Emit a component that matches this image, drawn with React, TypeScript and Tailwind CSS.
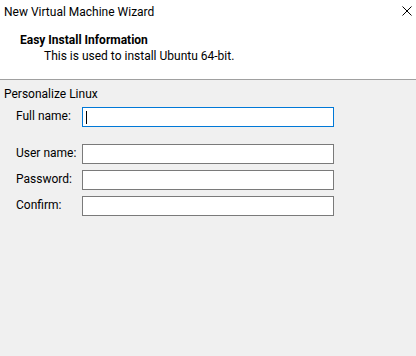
const FONT = "font-['Roboto','Noto_Sans',sans-serif]";

interface Field {
    label: string;
    focused?: boolean;
    spacing: string;
}

const FIELDS: Field[] = [
    { label: 'Full name:', focused: true, spacing: 'mt-[5px]' },
    { label: 'User name:', spacing: 'mt-[17px]' },
    { label: 'Password:', spacing: 'mt-[6px]' },
    { label: 'Confirm:', spacing: 'mt-[6px]' },
];

export default function App() {
    return (
        <div className={`w-[416px] h-[356px] bg-[#f0f0f0] text-[12px] leading-4 text-black ${FONT} flex flex-col overflow-hidden`}>
            {/* header */}
            <div className="bg-white h-[80px] border-b border-[#a0a0a0] flex flex-col">
                <div className="flex items-start justify-between pt-[4px] pl-[4px] pr-[4px]">
                    <span>New Virtual Machine Wizard</span>
                    <svg width="10" height="10" viewBox="0 0 10 10" className="mt-[2px]">
                        <path d="M0.5 0.5 L9.5 9.5 M9.5 0.5 L0.5 9.5" stroke="#000" strokeWidth="1" fill="none" />
                    </svg>
                </div>
                <div className="pl-[20px] mt-[12px] font-bold">Easy Install Information</div>
                <div className="pl-[44px]">This is used to install Ubuntu 64-bit.</div>
            </div>

            {/* body */}
            <div className="flex flex-col pt-[6px] pl-[4px]">
                <div>Personalize Linux</div>
                {FIELDS.map((f) => (
                    <div key={f.label} className={`flex items-start ${f.spacing}`}>
                        <span className="w-[78px] shrink-0 pl-[12px] pt-[1px] whitespace-nowrap">{f.label}</span>
                        <div
                            className={`w-[252px] h-[20px] bg-white border flex items-center ${
                                f.focused ? 'border-[#0078d7]' : 'border-[#7a7a7a]'
                            }`}
                        >
                            {f.focused && <span className="ml-[3px] w-px h-[13px] bg-black" />}
                        </div>
                    </div>
                ))}
            </div>
        </div>
    );
}
